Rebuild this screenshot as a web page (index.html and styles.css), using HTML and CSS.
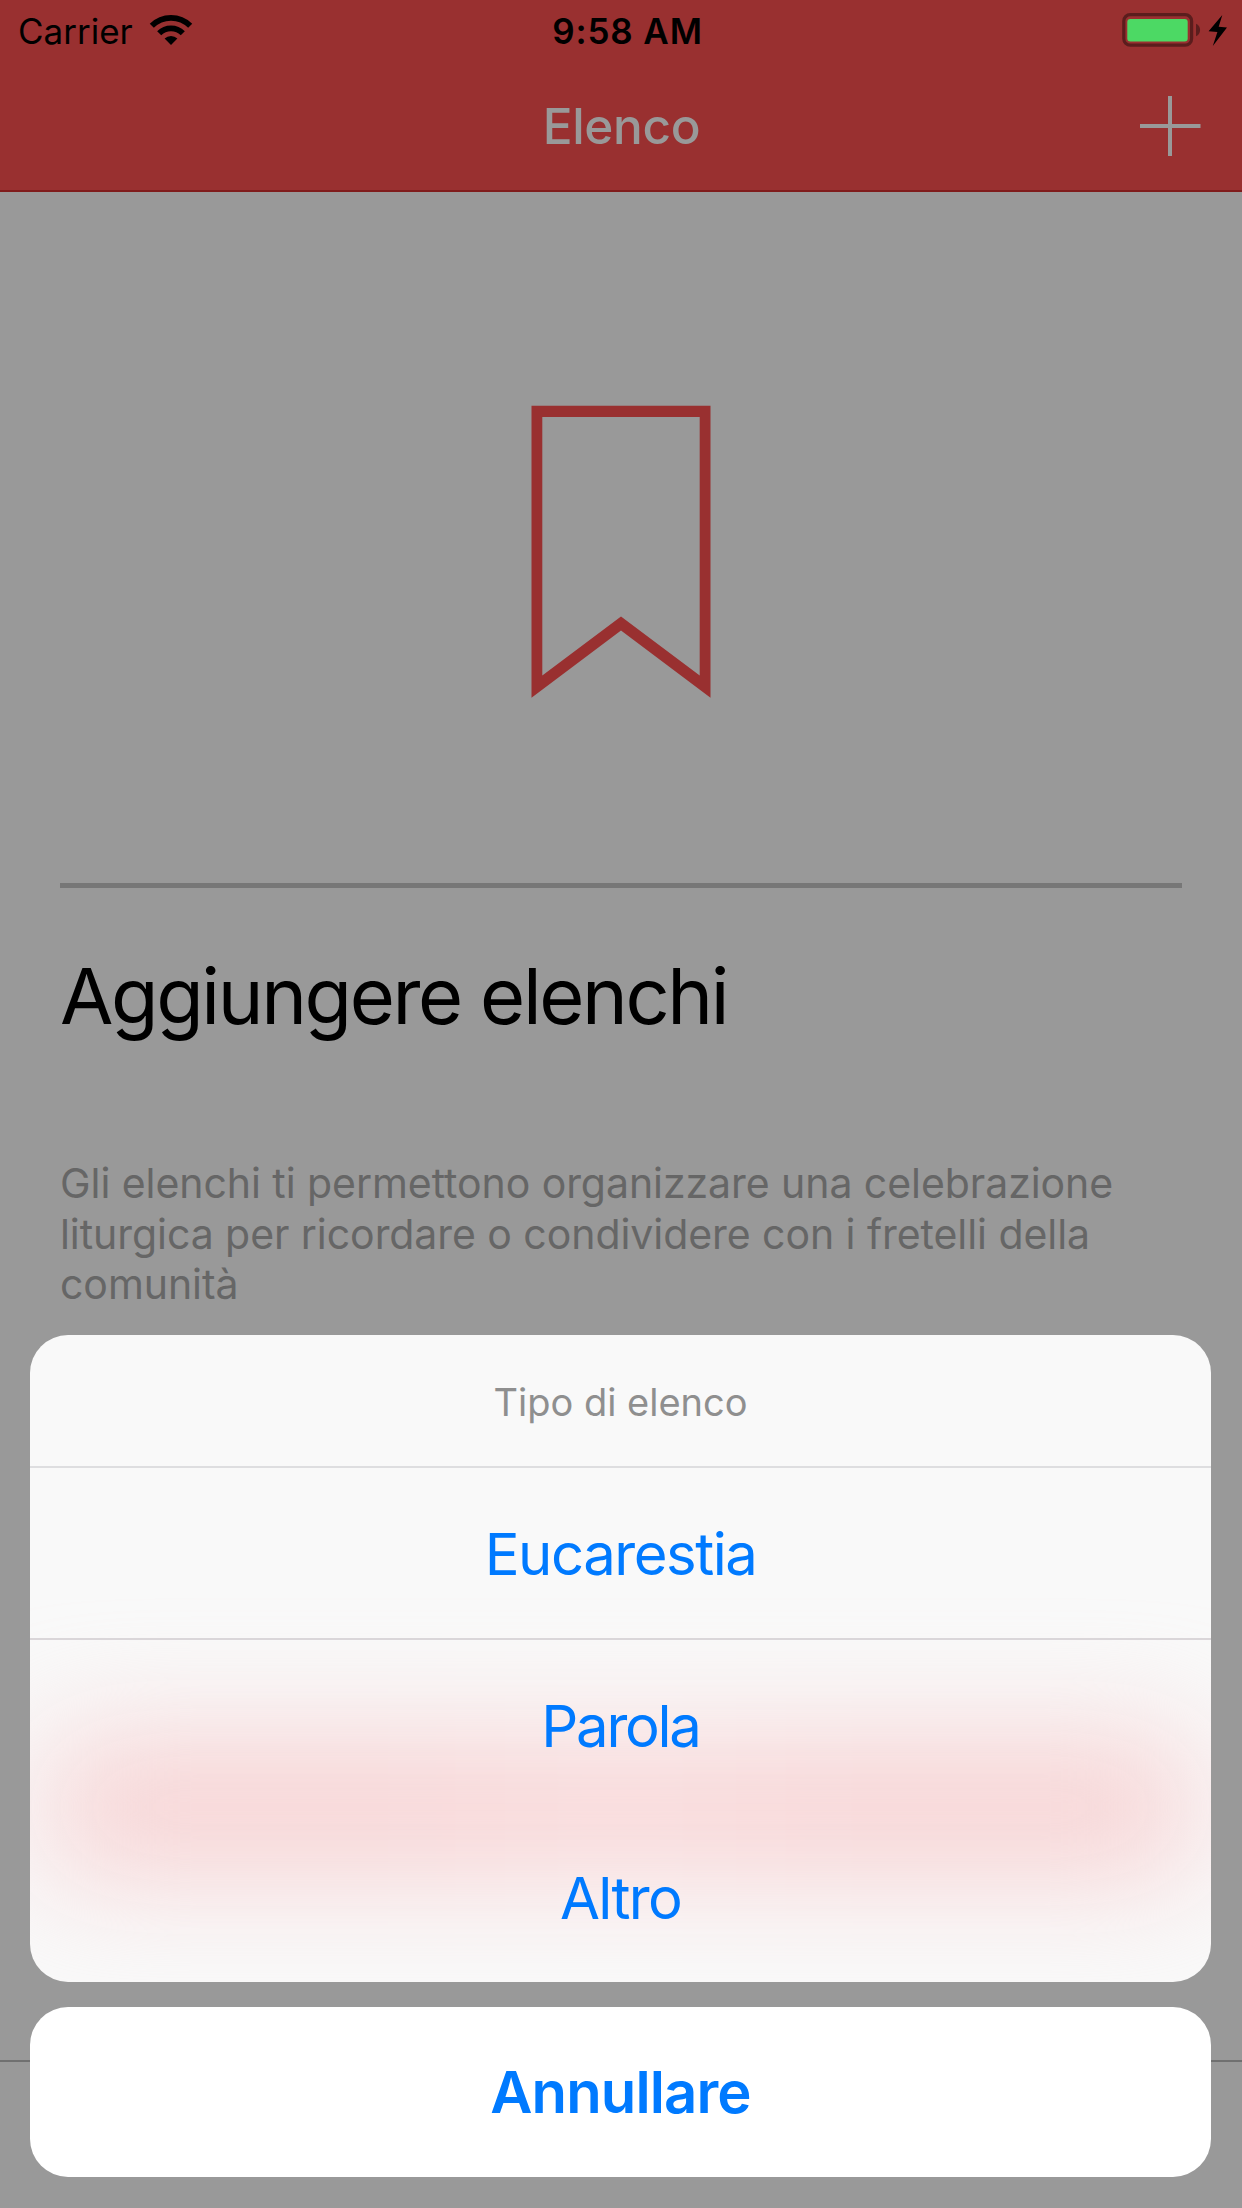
FILE: index.html
```
<!DOCTYPE html>
<html lang="it">
<head>
<meta charset="utf-8">
<title>Elenco</title>
<link rel="stylesheet" href="styles.css">
</head>
<body>
<div class="screen">
  <header class="header">
    <div class="status">
      <div class="status-left">
        <span class="carrier">Carrier</span>
        <svg class="wifi" width="44" height="34" viewBox="149 13 44 34">
          <g fill="none" stroke="#000" stroke-width="5.8">
            <path d="M151.8 25.8A27.2 27.2 0 0 1 190.2 25.8"/>
            <path d="M159.2 33.2A16.7 16.7 0 0 1 182.8 33.2"/>
          </g>
          <path d="M171 45L164.6 38.6A9.1 9.1 0 0 1 177.4 38.6Z"/>
        </svg>
      </div>
      <span class="time">9:58 AM</span>
      <svg class="battery" width="108" height="38" viewBox="1121 12 108 38">
        <rect x="1123.8" y="14.6" width="67.8" height="30.6" rx="6.5" fill="none" stroke="#5b1d1d" stroke-width="3.2"/>
        <rect x="1127.3" y="19" width="60.4" height="22.6" rx="3" fill="#4cd964"/>
        <path d="M1196 23.8C1201.4 25.8 1201.4 34.2 1196 36.2Z" fill="#5b1d1d"/>
        <path d="M1222.3 15L1208.6 31.3L1217.4 32L1212.8 46L1227 27.4L1218.7 26.8Z"/>
      </svg>
    </div>
    <div class="nav">
      <h1 class="title">Elenco</h1>
      <svg class="add" width="62" height="62" viewBox="0 0 62 62" stroke="#999" stroke-width="4">
        <path d="M1 31H61.5M31 1V61"/>
      </svg>
    </div>
  </header>

  <main class="content">
    <div class="hero">
      <svg width="180" height="294" viewBox="531 405 180 294">
        <path fill="#993030" fill-rule="evenodd" d="M531.5 405.7H710.5V697.7L621 630.5L531.5 697.7ZM542.3 417V675.5L621 616.5L699.7 675.5V417Z"/>
      </svg>
    </div>
    <h2 class="heading">Aggiungere elenchi</h2>
    <p class="text">Gli elenchi ti permettono organizzare una celebrazione liturgica per ricordare o condividere con i fretelli della comunità</p>
  </main>
  <footer class="tabbar"></footer>

  <div class="actions">
    <div class="sheet">
      <div class="glow"></div>
      <div class="sheet-title">Tipo di elenco</div>
      <div class="option option-eucarestia">Eucarestia</div>
      <div class="option option-parola">Parola</div>
      <div class="option option-altro">Altro</div>
    </div>
    <div class="cancel">Annullare</div>
  </div>
</div>
</body>
</html>
```
FILE: styles.css
```
* {
  box-sizing: border-box;
  margin: 0;
}

body {
  font-family: Inter, "Liberation Sans", sans-serif;
  background: #999;
}

.screen {
  position: relative;
  display: flex;
  flex-direction: column;
  width: 1242px;
  height: 2208px;
  overflow: hidden;
  background: #999;
}

/* Status and navigation bars */
.header {
  height: 192px;
  background: #993030;
  border-bottom: 2px solid #801c1c;
}

.status {
  display: grid;
  grid-template-columns: 1fr auto 1fr;
  align-items: center;
  height: 62px;
  padding: 0 13px 0 18px;
  font-size: 35px;
  line-height: 62px;
}

.status-left {
  display: flex;
  align-items: center;
  gap: 16px;
}

.wifi {
  margin-top: -2px;
}

.time {
  font-weight: 600;
  letter-spacing: 0.88px;
  margin-left: 8px;
}

.battery {
  justify-self: end;
}

.nav {
  display: grid;
  grid-template-columns: 1fr auto 1fr;
  align-items: center;
  height: 128px;
  padding-right: 41px;
}

.title {
  grid-column: 2;
  margin-left: 42px;
  font-size: 49.5px;
  font-weight: 500;
  letter-spacing: -0.35px;
  line-height: 128px;
  color: #999;
}

.add {
  justify-self: end;
}

/* Empty state */
.content {
  flex: 1;
  padding: 0 60px;
}

.hero {
  display: flex;
  justify-content: center;
  height: 696px;
  padding-top: 213px;
  border-bottom: 5px solid #777;
}

.heading {
  margin-top: 58px;
  font-size: 77.5px;
  font-weight: 400;
  letter-spacing: -2.4px;
  line-height: 100px;
  color: #000;
}

.text {
  margin-top: 112px;
  font-size: 41px;
  letter-spacing: -0.06px;
  line-height: 50.5px;
  color: #666;
}

.tabbar {
  height: 148px;
  border-top: 2px solid #707070;
}

/* Action sheet over the dimmed screen */
.actions {
  position: absolute;
  left: 30px;
  right: 31px;
  bottom: 31px;
  display: flex;
  flex-direction: column;
  gap: 25px;
  text-align: center;
  color: #007aff;
}

.sheet {
  position: relative;
  overflow: hidden;
  height: 647px;
  border-radius: 38px;
  background: #f9f9f9;
}

.glow {
  position: absolute;
  left: 18px;
  right: 18px;
  top: 407px;
  height: 130px;
  border-radius: 12px;
  background: linear-gradient(90deg, #f7d0d1 30%, #f9d5d6 50%, #f7d0d1 70%);
  filter: blur(60px);
}

.sheet-title,
.option {
  position: relative;
}

.sheet-title {
  height: 133px;
  border-bottom: 2px solid #dedee0;
  font-size: 38px;
  line-height: 134px;
  color: #8f8f8f;
}

.option {
  height: 172px;
  font-size: 58px;
  line-height: 172px;
}

.option-eucarestia {
  border-bottom: 2px solid #dad6d9;
  letter-spacing: -1.47px;
}

.option-parola {
  letter-spacing: -2.26px;
}

.option-altro {
  letter-spacing: -1.69px;
}

.cancel {
  height: 170px;
  border-radius: 38px;
  background: #fff;
  font-size: 58px;
  font-weight: 600;
  letter-spacing: -0.89px;
  line-height: 171px;
}
```
